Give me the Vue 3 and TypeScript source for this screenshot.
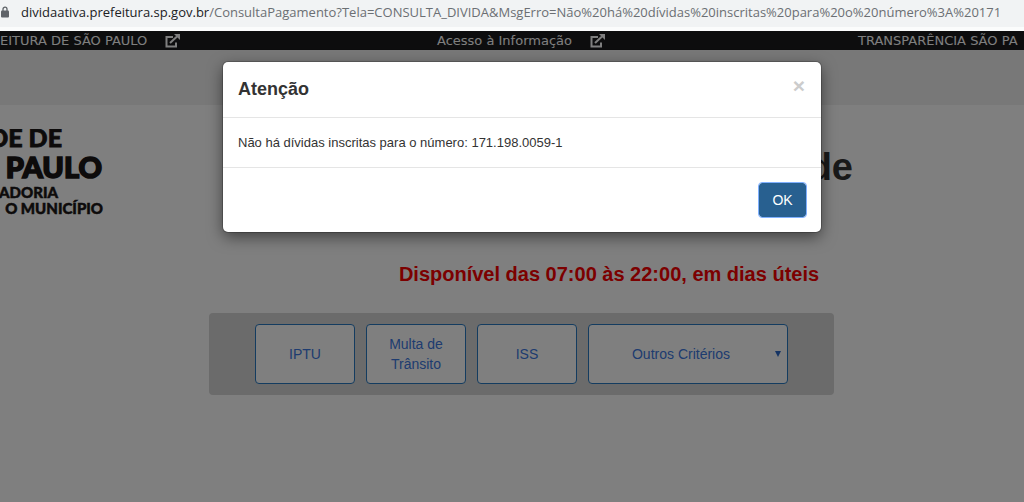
<script setup lang="ts">
import { ref } from 'vue'

const url = {
  host: 'dividaativa.prefeitura.sp.gov.br',
  path: '/ConsultaPagamento?Tela=CONSULTA_DIVIDA&MsgErro=Não%20há%20dívidas%20inscritas%20para%20o%20número%3A%20171',
}
const criteria = ['IPTU', 'Multa de Trânsito', 'ISS']
const open = ref(true)
</script>

<template>
  <div class="window">
    <div class="address">
      <svg class="lock" viewBox="0 0 8 12" aria-hidden="true">
        <path d="M2 5V3.2a2 2 0 0 1 4 0V5" fill="none" stroke="#5f6368" stroke-width="1.3" />
        <rect x="0" y="4.5" width="8" height="7" rx="1" fill="#5f6368" />
      </svg>
      <span class="url"><span class="host">{{ url.host }}</span>{{ url.path }}</span>
    </div>

    <div class="page">
      <nav class="topbar">
        <a href="#">EITURA DE SÃO PAULO
          <svg class="ext" viewBox="0 0 15 14" aria-hidden="true">
            <path d="M8 3H1.500V12.500H11V8.500" />
            <path d="M5 9L12 2.500" />
            <path class="tip" d="M9 0H15V6Z" />
          </svg>
        </a>
        <a href="#">Acesso à Informação
          <svg class="ext" viewBox="0 0 15 14" aria-hidden="true">
            <path d="M8 3H1.500V12.500H11V8.500" />
            <path d="M5 9L12 2.500" />
            <path class="tip" d="M9 0H15V6Z" />
          </svg>
        </a>
        <a href="#">TRANSPARÊNCIA SÃO PA</a>
      </nav>
      <div class="band"></div>

      <header class="head">
        <svg class="logo" viewBox="0 0 104 92" role="img" aria-label="São Paulo">
          <g text-anchor="end" fill="#1a1616" stroke="#1a1616" font-weight="900">
            <text x="62" y="18" font-size="25" stroke-width="0.8">DE DE</text>
            <text x="102" y="49" font-size="29" stroke-width="1.6">PAULO</text>
            <text x="58" y="69" font-size="15" stroke-width="0.5">ADORIA</text>
            <text x="103" y="85" font-size="15" stroke-width="0.5">O MUNICÍPIO</text>
          </g>
        </svg>
        <div class="titles">
          <h1>de</h1>
          <p class="hours">Disponível das 07:00 às 22:00, em dias úteis</p>
        </div>
      </header>

      <main class="main">
        <div class="panel">
          <button v-for="c in criteria" :key="c" type="button" class="choice">{{ c }}</button>
          <div class="select-box">
            <select class="choice" aria-label="Outros Critérios">
              <option>Outros Critérios</option>
            </select>
            <span class="arrow" aria-hidden="true"></span>
          </div>
        </div>
      </main>

      <div v-if="open" class="backdrop">
        <section class="modal" role="dialog" aria-modal="true" aria-labelledby="modal-title">
          <div class="modal-head">
            <h2 id="modal-title">Atenção</h2>
            <button type="button" class="close" @click="open = false">×</button>
          </div>
          <p class="modal-body">Não há dívidas inscritas para o número: 171.198.0059-1</p>
          <div class="modal-foot">
            <button type="button" class="ok" @click="open = false">OK</button>
          </div>
        </section>
      </div>
    </div>
  </div>
</template>

<style>
body {
  margin: 0;
  background: #fff;
}
</style>

<style scoped>
* {
  box-sizing: border-box;
}
.window {
  display: flex;
  flex-direction: column;
  min-height: 100vh;
  overflow: hidden;
  font-family: "Liberation Sans", Arial, sans-serif;
}
.address {
  display: flex;
  align-items: center;
  height: 31px;
  padding: 0 0 3px 1px;
  gap: 12px;
  background: #f1f3f4;
  border-bottom: 4px solid #fbfcfc;
  overflow: hidden;
}
.lock {
  flex: none;
  width: 8px;
  height: 12px;
}
.url {
  font: 13px/20px "Open Sans", "Noto Sans", sans-serif;
  white-space: nowrap;
  color: #6b6f73;
}
.host {
  color: #202124;
}
.page {
  position: relative;
  flex: 1;
  background: #fff;
}
.topbar {
  display: grid;
  grid-template-columns: 437fr 421fr 166fr;
  height: 19px;
  background: #1a1a1c;
}
.topbar a {
  display: flex;
  align-items: center;
  gap: 18px;
  font: 13px/19px "DejaVu Sans", Verdana, sans-serif;
  color: #fff;
  text-decoration: none;
  white-space: nowrap;
}
.ext {
  width: 15px;
  height: 14px;
}
.ext path {
  fill: none;
  stroke: #fff;
  stroke-width: 2;
}
.ext .tip {
  fill: #fff;
  stroke: none;
}
.band {
  height: 55px;
  background: #f1f1f1;
}
.head {
  display: grid;
  grid-template-columns: 194px 1fr;
  padding-top: 24px;
}
.logo {
  width: 104px;
  height: 92px;
  font-family: Lato, "Open Sans", sans-serif;
}
.titles {
  display: flex;
  flex-direction: column;
  align-items: center;
}
h1 {
  width: 100%;
  max-width: 488px;
  margin: 17px 0 0;
  font-size: 38px;
  line-height: 42px;
  text-align: right;
  color: #333;
}
.hours {
  margin: 74px 0 0;
  font-size: 20px;
  line-height: 24px;
  font-weight: 700;
  color: #f80000;
}
.main {
  display: flex;
  justify-content: center;
  padding: 27px 0 0 19px;
}
.panel {
  display: flex;
  justify-content: center;
  gap: 11px;
  width: 100%;
  max-width: 625px;
  padding: 11px;
  background: #d6d6d6;
  border-radius: 4px;
}
.choice {
  width: 100px;
  height: 60px;
  padding: 0 14px;
  border: 1px solid #2878c0;
  border-radius: 4px;
  background: #fff;
  color: #3c78e0;
  font: 14px/20px "Liberation Sans", Arial, sans-serif;
}
.select-box {
  position: relative;
}
select.choice {
  width: 200px;
  padding: 0 28px 0 14px;
  appearance: none;
  text-align: center;
  text-align-last: center;
}
.arrow {
  position: absolute;
  right: 7px;
  top: 27px;
  border: 3px solid transparent;
  border-top: 6px solid #2a68c8;
  border-bottom: 0;
  pointer-events: none;
}
.backdrop {
  position: absolute;
  inset: 0;
  display: flex;
  justify-content: center;
  align-items: flex-start;
  padding: 31px 0 0 20px;
  background: rgba(0, 0, 0, 0.5);
}
.modal {
  width: 100%;
  max-width: 598px;
  background: #fff;
  border-radius: 5px;
  box-shadow: 0 5px 15px rgba(0, 0, 0, 0.5), 0 0 0 1px rgba(0, 0, 0, 0.2);
  color: #333;
}
.modal-head {
  display: flex;
  justify-content: space-between;
  padding: 15px;
  border-bottom: 1px solid #e5e5e5;
}
h2 {
  margin: 0;
  font-size: 18px;
  line-height: 25px;
}
.close {
  width: 14px;
  height: 18px;
  padding: 0;
  border: 0;
  background: none;
  color: #ccc;
  font: 700 21px/18px "Liberation Sans", Arial, sans-serif;
}
.modal-body {
  margin: 0;
  padding: 15px;
  font-size: 13px;
  line-height: 19px;
}
.modal-foot {
  display: flex;
  justify-content: flex-end;
  padding: 15px;
  border-top: 1px solid #e5e5e5;
}
.ok {
  width: 47px;
  height: 34px;
  padding: 0;
  border: 1px solid #286090;
  border-radius: 3px;
  outline: 1px solid #7fb0ff;
  background: #286090;
  color: #fff;
  font: 14px/20px "Liberation Sans", Arial, sans-serif;
}
</style>
